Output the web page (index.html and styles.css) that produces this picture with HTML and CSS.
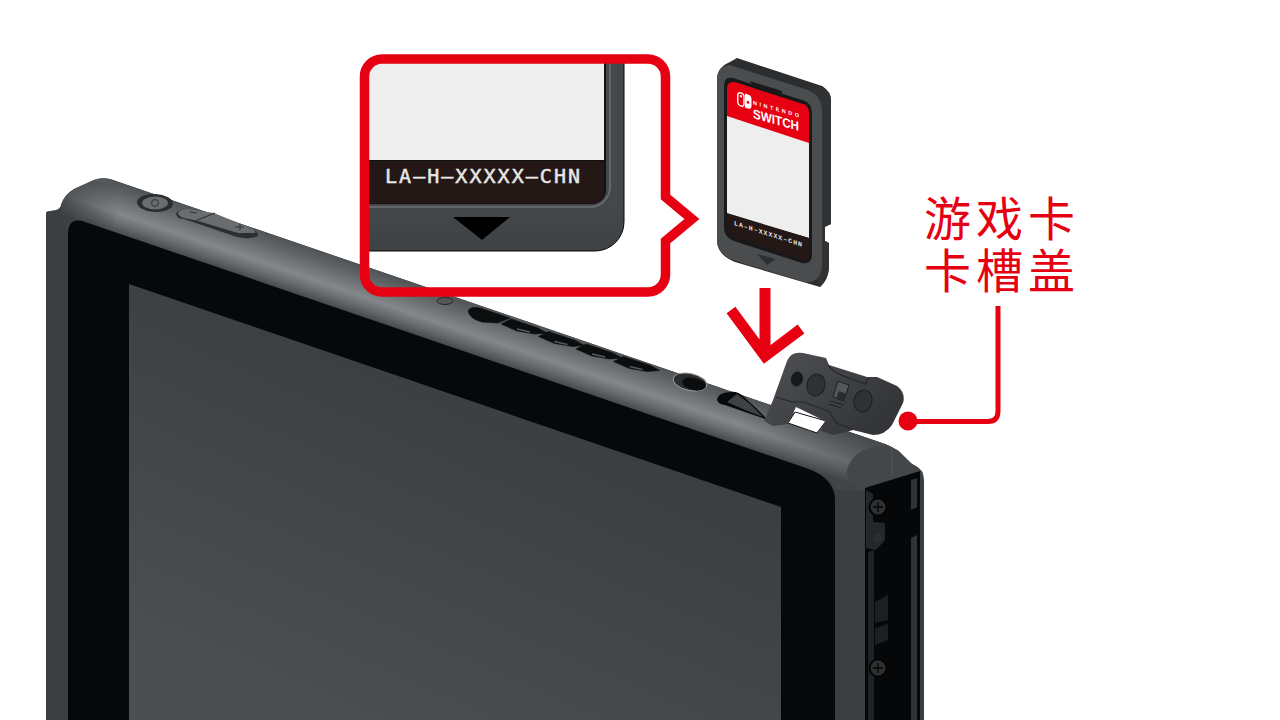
FILE: index.html
```html
<!DOCTYPE html>
<html lang="zh-CN">
<head>
<meta charset="utf-8">
<title>游戏卡卡槽盖</title>
<link rel="stylesheet" href="styles.css">
</head>
<body>
<main class="stage">
<svg class="art" viewBox="0 0 1280 720" width="1280" height="720" xmlns="http://www.w3.org/2000/svg">
  <defs>
    <linearGradient id="band" gradientUnits="userSpaceOnUse" x1="400" y1="278" x2="384" y2="325">
      <stop offset="0" stop-color="#505356"/>
      <stop offset=".2" stop-color="#606366"/>
      <stop offset=".6" stop-color="#85888b"/>
      <stop offset=".85" stop-color="#5f6265"/>
      <stop offset="1" stop-color="#44474a"/>
    </linearGradient>
    <linearGradient id="fadeR" gradientUnits="userSpaceOnUse" x1="740" y1="0" x2="890" y2="0">
      <stop offset="0" stop-color="#3e4144" stop-opacity="0"/>
      <stop offset="1" stop-color="#3e4144" stop-opacity=".6"/>
    </linearGradient>
    <linearGradient id="fadeL" gradientUnits="userSpaceOnUse" x1="60" y1="0" x2="120" y2="0">
      <stop offset="0" stop-color="#3c3f42" stop-opacity=".8"/>
      <stop offset="1" stop-color="#3c3f42" stop-opacity="0"/>
    </linearGradient>
    <linearGradient id="screen" gradientUnits="userSpaceOnUse" x1="450" y1="380" x2="300" y2="720">
      <stop offset="0" stop-color="#3b3f42"/>
      <stop offset="1" stop-color="#4b4f51"/>
    </linearGradient>
    <linearGradient id="flap" gradientUnits="userSpaceOnUse" x1="790" y1="355" x2="860" y2="435">
      <stop offset="0" stop-color="#4b4d50"/>
      <stop offset="1" stop-color="#333538"/>
    </linearGradient>
    <linearGradient id="zoomFrame" gradientUnits="userSpaceOnUse" x1="0" y1="205" x2="0" y2="251">
      <stop offset="0" stop-color="#45484b"/>
      <stop offset="1" stop-color="#3f4245"/>
    </linearGradient>
    <clipPath id="calloutClip"><rect x="365" y="60" width="300" height="232" rx="10"/></clipPath>
  </defs>

  <!-- console body -->
  <path class="body" d="M46 720V213Q46 211 50 211L56 210Q60 209 61 205Q64 195 74 189L94 180Q101 177 110 179L885 444Q893 447 899 453L912 464Q924 469 924 480V720Z"/>
  <path class="band" d="M61 205Q64 195 74 189L94 180Q101 177 110 179L885 444Q893 447 897 451L860 490L835 490Q832 478 815 472L80 220Q70 218 68 232Z"/>
  <path class="fade-l" d="M61 205Q64 195 74 189L94 180L130 192L110 228L68 232Z"/>
  <path class="fade-r" d="M740 395L885 444Q893 447 897 451L860 490L835 490Q832 478 815 472L730 442Z"/>

  <!-- corner cap -->
  <path class="cap" d="M847 474Q846 466 855 456Q862 449 874 447L888 446Q897 448 904 456L912 464Q920 468 923 473L866 491Q852 490 847 474Z"/>
  <path class="cap-line" d="M892 447V476"/>

  <!-- bezel and screen -->
  <path class="bezel" d="M68 720V234Q68 218 82 221L806 468Q835 478 835 500V720Z"/>
  <path class="screen" d="M129 720V284L781 507V720Z"/>

  <!-- right rail -->
  <path class="rail" d="M865 488L920 471V720H865Z"/>
  <path class="rail-bar" d="M911 480L917 478V507L911 510Z"/>
  <path class="rail-bar" d="M911 538L917 535V720H911Z"/>
  <path class="rail-bar-d" d="M868 552L874 550V720H868Z"/>
  <path class="rail-plate" d="M866 490L873 494V522L885 523V540L876 550L866 548Z"/>
  <circle class="screw" cx="878" cy="507" r="8.500"/>
  <path class="cross" d="M878 502V512M873 507H883"/>
  <circle class="pin" cx="878" cy="538" r="4.500"/>
  <path class="rail-block" d="M875 602L888 595V620L875 623Z"/>
  <path class="rail-block" d="M875 628L888 624V640L875 645Z"/>
  <circle class="screw" cx="878" cy="668" r="8.500"/>
  <path class="cross" d="M878 663V673M873 668H883"/>

  <!-- power and volume -->
  <ellipse class="btn-ring" cx="155" cy="203" rx="18" ry="9" transform="rotate(3 155 203)"/>
  <ellipse class="btn-top" cx="155" cy="203" rx="13" ry="6.500"/>
  <circle class="btn-mark" cx="155" cy="203" r="3.500"/>
  <path class="btn-shadow" d="M176 214Q178 209 188 209L246 227Q259 231 258 236Q252 239 244 238L237 237L184 219Q177 219 176 214Z"/>
  <path class="btn-rock" d="M178 213Q180 209 188 209L214 213L248 227Q256 230 255 233L238 233L198 221L184 218Q178 216 178 213Z"/>
  <path class="btn-div" d="M195 221L215 213M190 212L197 213M235 227H244M240 224V230"/>

  <!-- ports -->
  <ellipse class="hole-ring" cx="445" cy="301" rx="8" ry="3.500"/>
  <g class="vents">
    <path d="M468 311Q470 306 480 308L510 318L498 323L482 322Q470 319 468 311Z"/>
    <path d="M501 324L511 319L538 328L547 333L535 334L517 331Z"/>
    <path transform="translate(37.500 12.500)" d="M501 324L511 319L538 328L547 333L535 334L517 331Z"/>
    <path transform="translate(75 25)" d="M501 324L511 319L538 328L547 333L535 334L517 331Z"/>
    <path transform="translate(112.500 37.500)" d="M501 324L511 319L538 328L547 333L535 334L517 331Z"/>
  </g>
  <g class="vent-marks">
    <path d="M517 329L530 332"/>
    <path d="M554.500 341.500L567.500 344.500"/>
    <path d="M592 354L605 357"/>
    <path d="M629.500 366.500L642.500 369.500"/>
  </g>
  <ellipse class="jack-ring" cx="690" cy="382" rx="17" ry="8.500" transform="rotate(12 690 382)"/>
  <ellipse class="jack" cx="694" cy="384" rx="12" ry="6" transform="rotate(12 694 384)"/>
  <path class="card-slot" d="M717 399Q718 393 730 392Q738 391 744 397L756 408L768 420L742 411L725 405Q717 404 717 399Z"/>
  <path class="slot-light" d="M727 402L737 394L750 404L763 417L745 410Z"/>

  <!-- slot cover -->
  <g class="soft">
    <path class="flap-gap" d="M795 412L826 421L817 433L788 423Z"/>
    <path class="flap" d="M773 400L787 361Q791 351 803 353L826 358L829 365L867 377H877L897 386Q906 393 903 403L892 425Q885 435 873 435L853 430L843 433L833 435L821 431L825 421L796 407L788 424L773 426L764 421Z"/>
    <path class="flap-line" d="M829 365Q828 372 866 384L868 378M776 397L792 402L804 402L830 412L836 423L852 429"/>
    <ellipse class="flap-hole" cx="797" cy="379" rx="6" ry="7.500" transform="rotate(15 797 379)"/>
    <ellipse class="flap-dent" cx="816" cy="385" rx="9" ry="11" transform="rotate(15 816 385)"/>
    <ellipse class="flap-dent" cx="863" cy="401" rx="9" ry="11" transform="rotate(15 863 401)"/>
    <path class="flap-mark" d="M838 381L849 385L844 401L833 397Z"/>
    <path class="flap-mark-d" d="M839 391L847 394L844 401L836 398Z"/>
    <path class="flap-small" d="M830 401L844 405M829 404L841 408"/>
  </g>

  <!-- arrow -->
  <path class="red-line arrow" d="M765 288V355M731 310L765 356L801 329"/>

  <!-- game card -->
  <path class="card-back" d="M717 80Q717 67 730 62L737 58L822 86Q831 92 831 100V224L825 227V241L829 243V268Q828 280 820 287L735 262Q717 255 717 240Z"/>
  <path class="card-side" d="M812 89L822 86Q831 92 831 100V224L825 226L825 241L829 243V268Q828 280 820 287L818 282L822 110Z"/>
  <path class="card-face" d="M717 78Q718 66 730 65L808 90Q822 96 822 112V264Q822 284 804 282L736 261Q717 255 717 240Z"/>
  <path class="card-recess" d="M724 86Q724 76 733 78L805 101Q812 104 812 114V254Q812 265 802 263L734 241Q724 237 724 228Z"/>
  <path class="card-white" d="M727 114L809 142V238L727 214Z"/>
  <path class="card-red" d="M727 88Q727 81 735 82L803 104Q809 106 809 112V143L727 116Z"/>
  <path class="card-strip" d="M727 213L809 238V256Q809 262 802 260L734 237Q727 233 727 228Z"/>
  <path class="card-slit" d="M750 81L782 91V96L752 85Z"/>
  <path class="card-tri" d="M757 254L776 259L767 265Z"/>
  <g class="card-logo" transform="matrix(1 .3 0 1 737 91)">
    <rect class="logo-outline" x=".8" y=".8" width="6.200" height="13" rx="2.800"/>
    <path class="logo-fill" d="M8 .2H11Q14.500 .2 14.500 3.700V10.800Q14.500 14.300 11 14.300H8Z"/>
    <circle class="logo-dot" cx="11" cy="8" r="1.400"/>
    <circle class="logo-dot-w" cx="3.900" cy="4" r="1.200"/>
  </g>
  <text class="card-nin" transform="matrix(1 .28 0 1 753 104.500)" textLength="46" lengthAdjust="spacing">NINTENDO</text>
  <text class="card-sw" transform="matrix(1 .28 0 1 753 118)" textLength="46" lengthAdjust="spacingAndGlyphs">SWITCH</text>
  <text class="card-code" transform="matrix(1 .32 0 1 734 225)" textLength="68" lengthAdjust="spacing">LA–H–XXXXX–CHN</text>

  <!-- callout -->
  <g clip-path="url(#calloutClip)">
    <path class="zoom-frame" d="M360 40H624V222A29 29 0 0 1 595 251H360Z"/>
    <path class="zoom-inner-edge" d="M360 207H590A20 20 0 0 0 610 187V40"/>
    <path class="zoom-recess" d="M360 204H592A14 14 0 0 0 606 190V40H604V160H360Z"/>
    <rect class="zoom-label" x="360" y="50" width="244" height="110"/>
    <path class="zoom-strip" d="M360 161H604V192A11 11 0 0 1 593 203H360Z"/>
    <path class="zoom-tri" d="M453 217H510L482 240Z"/>
  </g>
  <text class="zoom-code" x="385" y="183" textLength="195" lengthAdjust="spacing">LA–H–XXXXX–CHN</text>
  <path class="callout" d="M382 59H648A17.500 17.500 0 0 1 665.500 76.500V197L692 219L665.500 241V274.500A17.500 17.500 0 0 1 648 292H382A17.500 17.500 0 0 1 364.500 274.500V76.500A17.500 17.500 0 0 1 382 59Z"/>

  <!-- leader -->
  <circle class="dot" cx="908" cy="421" r="9.500"/>
  <path class="red-line leader" d="M908 421.500H988Q998 421.500 998 411V306"/>
</svg>
<p class="caption">游戏卡<br>卡槽盖</p>
</main>
</body>
</html>
```
FILE: styles.css
```css
html, body { margin: 0; padding: 0; background: #fff; }
body { width: 1280px; height: 720px; overflow: hidden; }
.stage { position: relative; width: 1280px; height: 720px; }
.art { display: block; }

.caption {
  position: absolute;
  left: 924px;
  top: 190px;
  width: 160px;
  margin: 0;
  font-family: "Noto Sans CJK SC", sans-serif;
  font-size: 47px;
  line-height: 52px;
  letter-spacing: 5px;
  color: #e60012;
  white-space: nowrap;
}

.body { fill: #3c3f42; }
.band { fill: url(#band); }
.fade-l { fill: url(#fadeL); }
.fade-r { fill: url(#fadeR); }
.cap { fill: #44474a; }
.cap-line { stroke: #505356; stroke-width: 1; fill: none; }
.bezel { fill: #070809; }
.screen { fill: url(#screen); }

.rail { fill: #060708; }
.rail-bar { fill: #303336; }
.rail-bar-d { fill: #1f2224; }
.rail-plate { fill: #24272a; }
.screw { fill: #2e3032; stroke: #050505; stroke-width: 2; }
.cross { stroke: #050505; stroke-width: 1.300; fill: none; }
.pin { fill: #2c2f31; }
.rail-block { fill: #1c1e20; }

.btn-ring { fill: #2a2c2e; }
.btn-top { fill: #6a6d70; }
.btn-mark { fill: none; stroke: #2d2f31; stroke-width: 1; }
.btn-shadow { fill: #2c2e30; }
.btn-rock { fill: #6a6d70; }
.btn-div { stroke: #333537; stroke-width: 1.200; fill: none; }

.hole-ring { fill: #55585b; stroke: #26282a; stroke-width: 1; }
.vents path { fill: #0c0d0e; stroke: #0c0d0e; stroke-width: .6; stroke-linejoin: round; }
.vents, .soft { filter: blur(.35px); }
.vent-marks path { fill: none; stroke: #55585b; stroke-width: 1.500; }
.jack-ring { fill: #2a2c2e; stroke: #9a9c9e; stroke-width: 1; }
.jack { fill: #0b0c0d; }
.card-slot { fill: #08090a; }
.slot-light { fill: #3f4245; }

.flap-gap { fill: #fff; stroke: #111; stroke-width: 1; }
.flap { fill: url(#flap); }
.flap-line { stroke: #26282a; stroke-width: 1.200; fill: none; }
.flap-hole { fill: #17191a; }
.flap-dent { fill: #2f3134; stroke: #1c1e20; stroke-width: 1; }
.flap-mark { fill: #55585b; stroke: #1e2022; stroke-width: 1; }
.flap-mark-d { fill: #2a2c2e; }
.flap-small { stroke: #1e2022; stroke-width: 1; fill: none; }

.red-line { fill: none; stroke: #e60012; }
.arrow { stroke-width: 11; stroke-linejoin: miter; stroke-miterlimit: 10; }
.leader { stroke-width: 5; }
.dot { fill: #e60012; }
.callout { fill: none; stroke: #e60012; stroke-width: 9.500; stroke-linejoin: miter; stroke-miterlimit: 10; }

.card-back { fill: #2b2d2f; }
.card-side { fill: #303234; }
.card-face { fill: #4a4c4e; }
.card-recess { fill: #17181a; }
.card-white { fill: #eeeeee; }
.card-red { fill: #e60012; }
.card-strip { fill: #231815; }
.card-slit { fill: #191a1b; }
.card-tri { fill: #2d2f31; }
.logo-outline { fill: none; stroke: #fff; stroke-width: 1.400; }
.logo-fill { fill: #fff; }
.logo-dot { fill: #e60012; }
.logo-dot-w { fill: #fff; }
.card-nin { font: 700 5.500px "Liberation Sans", sans-serif; fill: #fff; }
.card-sw { font: 700 13px "Liberation Sans", sans-serif; fill: #fff; }
.card-code { font: 700 6.500px "Liberation Mono", monospace; fill: #e8e8e8; }

.zoom-frame { fill: url(#zoomFrame); stroke: #060708; stroke-width: 1; }
.zoom-inner-edge { fill: none; stroke: #6d7073; stroke-width: 1.500; }
.zoom-recess { fill: #101112; }
.zoom-label { fill: #eeeeee; }
.zoom-strip { fill: #231815; }
.zoom-tri { fill: #000; }
.zoom-code { font: 400 20px "DejaVu Sans Mono", monospace; fill: #e8e6e4; stroke: #e8e6e4; stroke-width: .5px; }
```
